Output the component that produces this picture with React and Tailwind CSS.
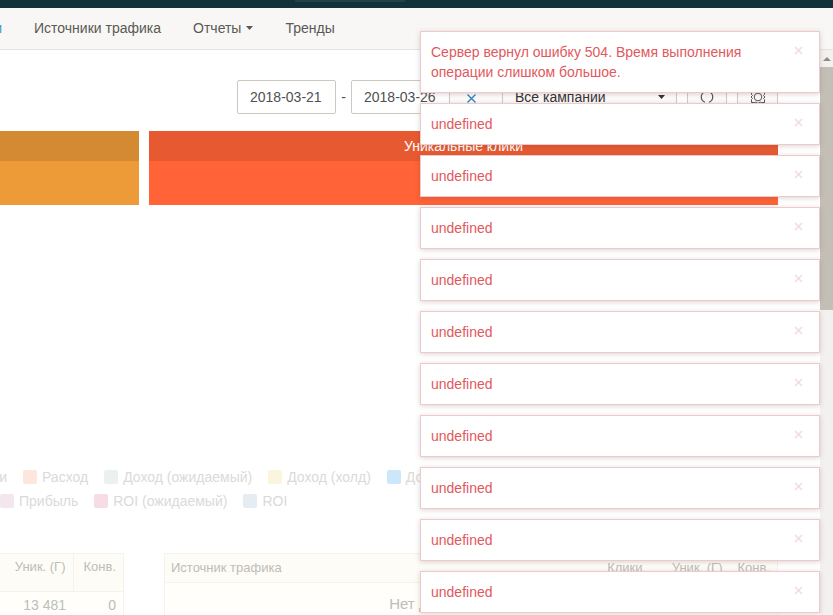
import { useState } from 'react';

const METRICS = [
  { title: '', size: 'w-[139px]', head: 'bg-[#d48a33]', body: 'bg-[#ec9b38]' },
  { title: 'Уникальные клики', size: 'flex-1', head: 'bg-[#e75a31]', body: 'bg-[#ff6337]' },
];

const LEGEND_TOP = [
  { label: 'Расход', color: 'bg-[#fde6dc]' },
  { label: 'Доход (ожидаемый)', color: 'bg-[#edf0f1]' },
  { label: 'Доход (холд)', color: 'bg-[#fbf5de]' },
  { label: 'Доход', color: 'bg-[#cde7fa]' },
];

const LEGEND_BOTTOM = [
  { label: 'Прибыль', color: 'bg-[#f3e6ec]' },
  { label: 'ROI (ожидаемый)', color: 'bg-[#f6dce4]' },
  { label: 'ROI', color: 'bg-[#e6edf2]' },
];

const MESSAGES = [
  'Сервер вернул ошибку 504. Время выполнения операции слишком большое.',
  ...Array(10).fill('undefined'),
];

function Legend({ items }) {
  return items.map(i => (
    <li key={i.label} className="flex items-center gap-[5px] whitespace-nowrap">
      <span className={`w-[14px] h-[14px] rounded-xs ${i.color}`} />
      {i.label}
    </li>
  ));
}

function Toasts() {
  const [items, setItems] = useState(MESSAGES.map((text, id) => ({ id, text })));

  return (
    <div className="absolute top-[31px] right-[13px] w-[400px] space-y-[10px]">
      {items.map(t => (
        <div key={t.id} role="alert" className="flex items-start justify-between border border-[#f0c9ca] bg-white p-[10px] shadow-[0_1px_5px_rgba(90,60,60,0.22)]">
          <p className="w-[330px] text-sm leading-5 text-[#e2585d]">{t.text}</p>
          <button
            aria-label="Закрыть"
            onClick={() => setItems(list => list.filter(x => x.id !== t.id))}
            className="mt-[3px] mr-[5px] p-px"
          >
            <svg width="9" height="9" viewBox="0 0 9 9" stroke="#f5dcdc" strokeWidth="1.7">
              <path d="M1 1l7 7M8 1l-7 7" />
            </svg>
          </button>
        </div>
      ))}
    </div>
  );
}

export default function App() {
  const [from, setFrom] = useState('2018-03-21');
  const [to, setTo]     = useState('2018-03-26');

  const inp = 'h-[34px] w-[99px] border border-[#cccabf] rounded-xs bg-white px-3 text-sm text-[#505050] focus:outline-none';
  const btn = 'h-[34px] border border-[#cfcaca] bg-[#fcfafa] flex items-center justify-center';

  return (
    <div className="relative h-screen overflow-hidden flex flex-col bg-white font-['Liberation_Sans',Arial,sans-serif] text-sm">
      <div className="h-2 shrink-0 bg-[#12323b]">
        <div className="ml-[295px] w-[110px] h-[2px] bg-[#21424c]" />
      </div>

      <nav className="h-[42px] shrink-0 flex items-center gap-8 bg-[#f8f7f5] border-b border-[#e3e3e1] pb-px text-[#5a5955]">
        <a href="#campaigns" className="flex w-[2px] justify-end overflow-hidden text-[#3a9cc4]">Кампании</a>
        <a href="#sources">Источники трафика</a>
        <button className="flex items-center gap-[5px]">
          Отчеты
          <svg width="7" height="4" viewBox="0 0 7 4" fill="#5a5955"><path d="M0 0h7L3.5 4z" /></svg>
        </button>
        <a href="#trends">Тренды</a>
      </nav>

      <div className="flex flex-1 min-h-0">
        <main className="flex-1 min-w-0 pt-[30px] overflow-hidden">
          {/* Filters */}
          <div className="flex items-center justify-end pr-[42px]">
            <input aria-label="Дата начала" value={from} onChange={e => setFrom(e.target.value)} className={inp} />
            <span className="w-[15px] text-center text-[#505050]">-</span>
            <input aria-label="Дата окончания" value={to} onChange={e => setTo(e.target.value)} className={inp} />
            <button aria-label="Сбросить" onClick={() => setTo('')} className="h-[34px] w-[52px] flex items-center justify-center bg-[#fcfafa] border-y border-[#cfcaca] pt-[3px] pr-[10px]">
              <svg width="9" height="9" viewBox="0 0 9 9" stroke="#2f86c0" strokeWidth="1.4"><path d="M.5.5l8 8M8.5.5l-8 8" /></svg>
            </button>
            <div className="grid items-center">
              <select aria-label="Кампания" className="col-start-1 row-start-1 appearance-none h-[34px] w-[175px] border border-[#cfcaca] bg-[#fcfafa] px-3 text-sm text-[#333]">
                <option>Все кампании</option>
              </select>
              <svg className="col-start-1 row-start-1 justify-self-end mr-3 pointer-events-none" width="7" height="4" viewBox="0 0 7 4" fill="#333"><path d="M0 0h7L3.5 4z" /></svg>
            </div>
            <button aria-label="Обновить" className={`${btn} ml-[10px] w-10`}>
              <svg width="14" height="14" viewBox="0 0 14 14" fill="none" stroke="#555" strokeWidth="1.2">
                <path d="M5 1.8a5.5 5.500 0 0 0 0 10.400M9 1.800a5.500 5.500 0 0 1 0 10.400" />
              </svg>
            </button>
            <button aria-label="Настройки" className={`${btn} ml-[10px] w-[41px]`}>
              <svg width="16" height="14" viewBox="0 0 16 14" fill="none" stroke="#555" strokeWidth="1">
                <circle cx="8" cy="7" r="3.8" />
                <path d="M4.500 1.500H1.500V4.500L2.500 5.500 1 7l1.500 1.500-1 1V12.500h3l1.500-.5 2 1.500 2-1.500 1.500.5h3V9.500l-1-1L15 7l-1.500-1.500 1-1V1.500h-3L10 2 8 .5 6 2z" />
              </svg>
            </button>
          </div>

          {/* Metrics */}
          <div className="mt-[17px] flex gap-[10px] pr-[42px]">
            {METRICS.map(m => (
              <section key={m.size} className={m.size}>
                <h3 className={`h-[30px] leading-[30px] text-center text-white ${m.head}`}>{m.title}</h3>
                <div className={`h-11 ${m.body}`} />
              </section>
            ))}
          </div>

          {/* Chart legend */}
          <div className="mt-[260px] leading-6 text-[#dadada]">
            <ul className="flex gap-4">
              <li className="flex w-[7px] justify-end overflow-hidden">Клики</li>
              <Legend items={LEGEND_TOP} />
            </ul>
            <ul className="flex gap-4">
              <Legend items={LEGEND_BOTTOM} />
            </ul>
          </div>

          {/* Tables */}
          <div className="mt-10 flex items-start gap-10 pr-[42px] text-[#bdbdb9]">
            <table className="w-[124px] table-fixed border-collapse bg-[#fffefa] text-right text-[13px]">
              <thead>
                <tr className="h-[38px] align-top bg-[#fdfcf6]">
                  <th className="w-[73px] border border-l-0 border-[#f4f3ec] px-[7px] pt-1 font-normal">Уник. (Г)</th>
                  <th className="border border-[#f4f3ec] px-[7px] pt-1 font-normal">Конв.</th>
                </tr>
              </thead>
              <tbody>
                <tr className="h-[27px] text-sm">
                  <td className="px-[7px]">13 481</td>
                  <td className="border-r border-[#f4f3ec] px-[7px]">0</td>
                </tr>
              </tbody>
            </table>

            <table className="flex-1 table-fixed border-collapse bg-[#fffefa] text-right text-[13px]">
              <thead>
                <tr className="h-[29px] border border-[#f4f3ec] bg-[#fdfcf6]">
                  <th className="px-[6px] text-left font-normal">Источник трафика</th>
                  <th className="w-[80px] px-[7px] font-normal">Клики</th>
                  <th className="w-[80px] px-[7px] font-normal">Уник. (Г)</th>
                  <th className="w-[48px] px-[7px] font-normal">Конв.</th>
                </tr>
              </thead>
              <tbody>
                <tr className="h-[42px] border border-[#f4f3ec]">
                  <td colSpan={4} className="pr-1 text-center text-[15px]">Нет доступных данных</td>
                </tr>
              </tbody>
            </table>
          </div>
        </main>

        {/* Scrollbar */}
        <div className="w-[13px] shrink-0 bg-[#f3f1ef]">
          <div className="h-[17px] flex items-center justify-center">
            <svg width="8" height="4" viewBox="0 0 8 4" fill="#8d8b88"><path d="M0 4h8L4 0z" /></svg>
          </div>
          <div className="h-[243px] bg-[#c3bfb7]" />
        </div>
      </div>

      <Toasts />
    </div>
  );
}
